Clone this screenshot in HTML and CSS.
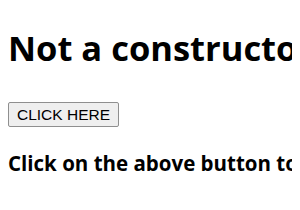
FILE: index.html
```html
<!DOCTYPE html>
<html lang="en">
<head>
    <meta charset="UTF-8">
    <meta name="viewport" content="width=device-width, initial-scale=1.0">
    <title>Not a constructor</title>
    <link rel="stylesheet" href="styles.css">
</head>
<body>
    <h1 class="title">Not a constructor error</h1>
    <button class="click-btn" id="clickBtn">CLICK HERE</button>
    <h3 class="sample">Click on the above button to get the error</h3>
</body>
</html>
```
FILE: styles.css
```css
body {
    font-family: "Open Sans", sans-serif;
    color: #000;
    margin: 8px;
    white-space: nowrap;
    overflow: hidden;
}
.title {
    font-size: 34.5px;
    line-height: 40px;
    margin: 20px 0 34px;
}
.click-btn {
    display: block;
    font-family: "Liberation Sans", Arial, sans-serif;
    font-size: 15.5px;
    line-height: 17px;
    padding: 3px 8px;
    color: #000;
    background-color: #efefef;
    border: 1px solid #8f8f8f;
    border-radius: 2px;
}
.sample {
    font-size: 20.5px;
    line-height: 24px;
    margin: 24px 0;
}
```
